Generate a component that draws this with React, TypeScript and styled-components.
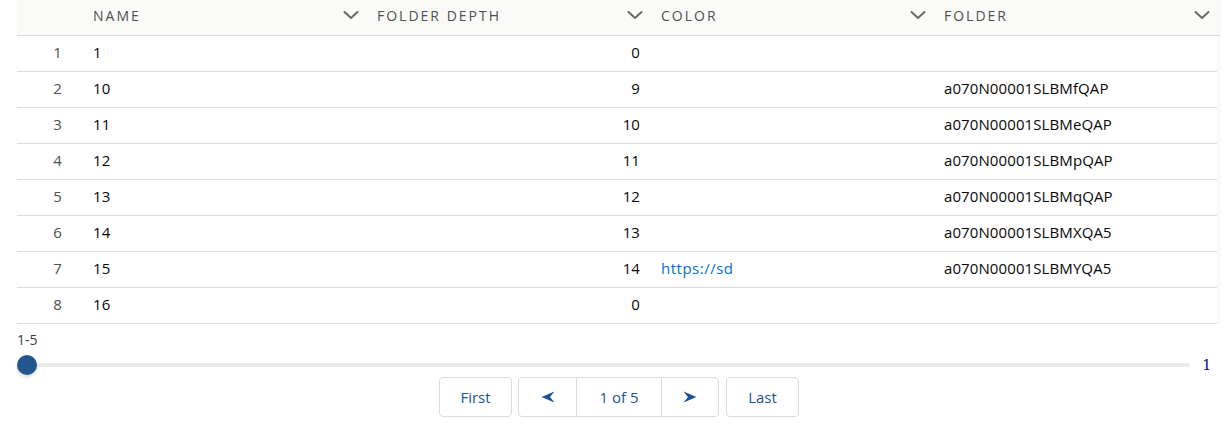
import React from "react";
import styled, { createGlobalStyle } from "styled-components";

const Global = createGlobalStyle`
  html, body { margin: 0; padding: 0; background: #fff; }
  body { font-family: "Open Sans", "Noto Sans", sans-serif; color: #080707; }
`;

const Page = styled.div`
  padding: 0 8px 0 17px;
  width: 1204px;
`;

const Table = styled.div`
  width: 1204px;
`;

const cols = "60px 284px 284px 283px 293px";

const HeaderRow = styled.div`
  display: grid;
  grid-template-columns: ${cols};
  height: 35px;
  background: #fafaf9;
  border-bottom: 1px solid #dddbda;
`;

const HeaderCell = styled.div`
  display: flex;
  align-items: center;
  justify-content: space-between;
  padding: 0 1px 5px 16px;
  font-family: "Open Sans", sans-serif;
  font-size: 14px;
  letter-spacing: 2px;
  text-transform: uppercase;
  color: #514f4d;
`;

const LastHeaderCell = styled(HeaderCell)`
  padding-right: 10px;
`;

const Chevron = () => (
  <svg width="18" height="12" viewBox="0 0 18 12">
    <path d="M2.5 3 L9 9 L15.5 3" fill="none" stroke="#6b6966" strokeWidth="2" strokeLinecap="round" strokeLinejoin="round" />
  </svg>
);

const Body = styled.div`
  width: 1200px;
  border-right: 4px solid #fafaf9;
`;

const Row = styled.div`
  display: grid;
  grid-template-columns: ${cols};
  border-bottom: 1px solid #dddbda;
  align-items: center;
  font-size: 15px;
  letter-spacing: 0.1px;
  padding-bottom: 3px;
  box-sizing: border-box;
  height: 36px;
`;

const NumCell = styled.div`
  text-align: right;
  padding-right: 15px;
  color: #514f4d;
`;

const Cell = styled.div<{ $right?: boolean }>`
  padding: 0 ${(p) => (p.$right ? "5px" : "0")} 0 16px;
  text-align: ${(p) => (p.$right ? "right" : "left")};
  color: #080707;
  white-space: nowrap;
`;

const Link = styled.a`
  color: #0070d2;
  text-decoration: none;
  letter-spacing: 0.5px;
`;

const SliderBlock = styled.div`
  padding-top: 8px;
`;

const RangeLabel = styled.div`
  font-size: 14px;
  color: #3e3e3c;
  height: 16px;
  line-height: 16px;
`;

const SliderRow = styled.div`
  display: flex;
  align-items: center;
  height: 28px;
  margin-top: 3px;
`;

const Track = styled.div`
  position: relative;
  flex: 0 0 1173px;
  height: 4px;
  border-radius: 2px;
  background: #ecebea;
`;

const Thumb = styled.div`
  position: absolute;
  left: 0;
  top: -8px;
  width: 20px;
  height: 20px;
  border-radius: 50%;
  background: #22568f;
  box-shadow: 0 2px 3px rgba(0, 0, 0, 0.16);
`;

const MaxLabel = styled.span`
  margin-left: 12px;
  font-family: "DejaVu Serif", "Liberation Serif", serif;
  font-size: 15px;
  color: #0a1a70;
`;

const Pager = styled.div`
  display: flex;
  justify-content: center;
  margin-top: -2px;
`;

const Btn = styled.button<{ $w: number }>`
  width: ${(p) => p.$w}px;
  height: 40px;
  border: 1px solid #dddbda;
  border-radius: 4px;
  background: #fff;
  font-family: "Open Sans", sans-serif;
  font-size: 15px;
  color: #1b5297;
  display: flex;
  align-items: center;
  justify-content: center;
  padding: 0;
`;

const Group = styled.div`
  display: flex;
  height: 40px;
  box-sizing: border-box;
  border: 1px solid #dddbda;
  border-radius: 4px;
  overflow: hidden;
  margin: 0 7px 0 6px;
`;

const GroupItem = styled.div<{ $w: number; $sep?: boolean }>`
  width: ${(p) => p.$w}px;
  display: flex;
  align-items: center;
  justify-content: center;
  font-size: 15px;
  color: #1b5297;
  border-left: ${(p) => (p.$sep ? "1px solid #dddbda" : "none")};
`;

const Arrow = ({ dir }: { dir: "l" | "r" }) => (
  <svg width="14" height="12" viewBox="0 0 14 12">
    {dir === "l" ? (
      <path d="M0.5 6 L13.5 0.5 L9 6 L13.5 11.5 Z" fill="#1b5297" />
    ) : (
      <path d="M13.5 6 L0.5 0.5 L5 6 L0.5 11.5 Z" fill="#1b5297" />
    )}
  </svg>
);

const rows: { name: string; depth: string; color?: string; folder: string }[] = [
  { name: "1", depth: "0", folder: "" },
  { name: "10", depth: "9", folder: "a070N00001SLBMfQAP" },
  { name: "11", depth: "10", folder: "a070N00001SLBMeQAP" },
  { name: "12", depth: "11", folder: "a070N00001SLBMpQAP" },
  { name: "13", depth: "12", folder: "a070N00001SLBMqQAP" },
  { name: "14", depth: "13", folder: "a070N00001SLBMXQA5" },
  { name: "15", depth: "14", color: "https://sd", folder: "a070N00001SLBMYQA5" },
  { name: "16", depth: "0", folder: "" },
];

export default function App() {
  return (
    <>
      <Global />
      <Page>
        <Table>
          <HeaderRow>
            <div />
            <HeaderCell>Name<Chevron /></HeaderCell>
            <HeaderCell>Folder Depth<Chevron /></HeaderCell>
            <HeaderCell>Color<Chevron /></HeaderCell>
            <LastHeaderCell>Folder<Chevron /></LastHeaderCell>
          </HeaderRow>
          <Body>
            {rows.map((r, i) => (
              <Row key={i}>
                <NumCell>{i + 1}</NumCell>
                <Cell>{r.name}</Cell>
                <Cell $right>{r.depth}</Cell>
                <Cell>{r.color ? <Link href="#">{r.color}</Link> : null}</Cell>
                <Cell>{r.folder}</Cell>
              </Row>
            ))}
          </Body>
        </Table>
        <SliderBlock>
          <RangeLabel>1-5</RangeLabel>
          <SliderRow>
            <Track>
              <Thumb />
            </Track>
            <MaxLabel>1</MaxLabel>
          </SliderRow>
        </SliderBlock>
        <Pager>
          <Btn $w={73}>First</Btn>
          <Group>
            <GroupItem $w={57}><Arrow dir="l" /></GroupItem>
            <GroupItem $w={84} $sep>1 of 5</GroupItem>
            <GroupItem $w={56} $sep><Arrow dir="r" /></GroupItem>
          </Group>
          <Btn $w={73}>Last</Btn>
        </Pager>
      </Page>
    </>
  );
}
